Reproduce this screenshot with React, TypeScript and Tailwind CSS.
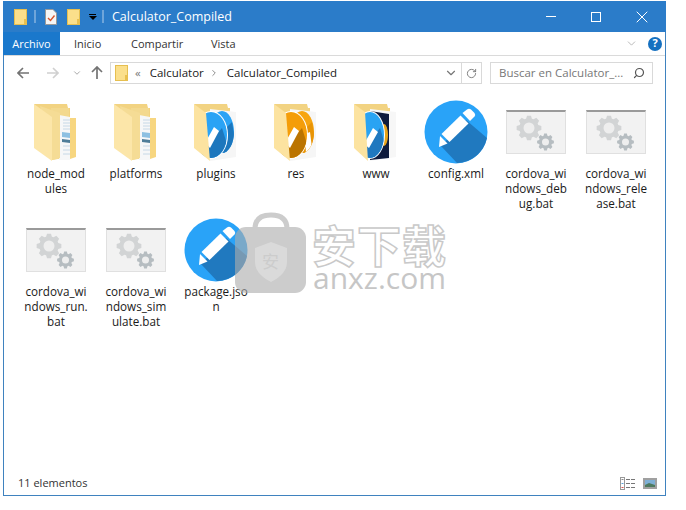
import React, { useId } from "react";
import { ChevronDown, ChevronRight, X, Search, RotateCw } from "lucide-react";

const cssFont = "font-['Open_Sans','Noto_Sans',sans-serif]";

function gearPath(cx: number, cy: number, r: number, teeth: number) {
  const pts: string[] = [];
  const step = (Math.PI * 2) / teeth;
  for (let i = 0; i < teeth; i++) {
    const a = i * step;
    const offs: [number, number][] = [
      [-0.32, 0.78],
      [-0.17, 1],
      [0.17, 1],
      [0.32, 0.78],
    ];
    for (const [o, k] of offs) {
      const x = cx + Math.cos(a + o * step * 1.2) * r * k;
      const y = cy + Math.sin(a + o * step * 1.2) * r * k;
      pts.push(`${x.toFixed(2)} ${y.toFixed(2)}`);
    }
  }
  return "M" + pts.join("L") + "Z";
}

function SmallFolder() {
  return (
    <svg width="13" height="16" viewBox="0 0 13 16">
      <rect x="0.5" y="0.5" width="12" height="15" fill="#fbdf8b" stroke="#e6bf50" />
      <rect x="10" y="10" width="2.5" height="5.5" fill="#e9c04f" />
    </svg>
  );
}

function FolderBack({ children }: { children?: React.ReactNode }) {
  return (
    <svg width="60" height="60" viewBox="0 0 60 60">
      <path d="M8 2H41L42 6H44V55L26 58Z" fill="#f2d382" />
      {children}
    </svg>
  );
}

function DocFolder() {
  return (
    <FolderBack>
      <path d="M25 6H43V57H25Z" fill="#f3d98f" />
      <path d="M33 13L44 15V58L33 58Z" fill="#f6f7f8" />
      <path d="M37 18H44M37 21H44M37 24H44M37 27H44M37 44H44M37 48H44M37 52H44" stroke="#c6d8e6" strokeWidth="1" />
      <path d="M36 30L44 31V36L36 35Z" fill="#8dc0e2" />
      <path d="M36 37L44 38V41L36 40Z" fill="#4f7d99" />
      <path d="M44 16H50V55L44 57Z" fill="#f7d680" />
      <path d="M14 4L34 11V56L26 58Z" fill="#f5dc95" />
      <path d="M8 2L26 15V59L8 46Z" fill="#fce6a9" />
    </FolderBack>
  );
}

function DiscFolder({
  light,
  dark,
  backLight,
  backDark,
  backPencil,
}: {
  light: string;
  dark: string;
  backLight: string;
  backDark: string;
  backPencil?: boolean;
}) {
  const id = useId();
  return (
    <FolderBack>
      <path d="M24 7L50 10V55L24 59Z" fill="#f6f6f6" />
      <clipPath id={id + "b"}>
        <ellipse cx="36" cy="30" rx="12" ry="21" />
      </clipPath>
      <clipPath id={id + "f"}>
        <ellipse cx="25" cy="33" rx="16" ry="23" />
      </clipPath>
      <g clipPath={`url(#${id}b)`}>
        <rect x="20" y="5" width="30" height="50" fill={backLight} />
        <path d="M28 38L46 20L52 56H28Z" fill={backDark} />
        {backPencil && <path d="M39 32L44 30L46 46L40 52Z" fill="#ffffff" />}
      </g>
      <ellipse cx="25" cy="33" rx="17" ry="24" fill="#ffffff" />
      <g clipPath={`url(#${id}f)`}>
        <rect x="0" y="8" width="44" height="50" fill={light} />
        <path d="M14 52L36 26L46 58H14Z" fill={dark} />
      </g>
      <path d="M19 41L28 25L33 29L24 46Z" fill="#ffffff" />
      <path d="M8 2L20 11L24 59L8 46Z" fill="#fce3a0" />
    </FolderBack>
  );
}

function WwwFolder() {
  const id = useId();
  return (
    <FolderBack>
      <path d="M24 7L50 10V55L24 59Z" fill="#f7f7f7" />
      <path d="M24 9L43 12V56L24 58Z" fill="#0f1b3d" />
      <ellipse cx="38" cy="33" rx="4" ry="11" fill="#e8a318" />
      <ellipse cx="24" cy="33" rx="15" ry="24" fill="#ffffff" />
      <clipPath id={id}>
        <ellipse cx="24" cy="33" rx="14" ry="23" />
      </clipPath>
      <g clipPath={`url(#${id})`}>
        <rect x="0" y="8" width="44" height="50" fill="#29a3f3" />
        <path d="M14 52L34 26L44 58H14Z" fill="#1f78bf" />
      </g>
      <path d="M18 42L27 26L32 30L23 46Z" fill="#ffffff" />
      <path d="M8 2L19 10L22 59L8 46Z" fill="#fce3a0" />
    </FolderBack>
  );
}

function PencilBadge() {
  return (
    <svg width="64" height="64" viewBox="0 0 64 64">
      <circle cx="32" cy="32" r="31.5" fill="#29a3f8" />
      <path d="M17 46L42 20L63 38A31.5 31.5 0 0 1 33 63Z" fill="#2079bf" />
      <path d="M38.5 13L43 9.5Q45 8 47 9.5L50.5 13Q52 15 50.5 16.5L46 21Z" fill="#ffffff" />
      <path d="M36.5 15.5L44.5 23.5L25.5 42L17.5 34Z" fill="#ffffff" />
      <path d="M16 36L23.5 43.5L15 47Z" fill="#ffffff" />
    </svg>
  );
}

function BatIcon() {
  return (
    <div className="relative h-[44px] w-[60px] border border-[#e0e0e0] border-t-[2px] border-t-[#9a9a9a] bg-[#f2f2f2]">
      <svg width="58" height="40" viewBox="0 0 58 40" className="absolute left-0 top-0">
        <path d={gearPath(22, 16, 12.5, 8)} fill="#d2d4d5" />
        <circle cx="22" cy="16" r="5.5" fill="#eeeeee" />
        <path d={gearPath(38.5, 30, 8.5, 8)} fill="#b6bdc1" />
        <circle cx="38.5" cy="30" r="3.5" fill="#eeeeee" />
      </svg>
    </div>
  );
}

type Item = { icon: React.ReactNode; label: string };

const items: Item[] = [
  { icon: <DocFolder />, label: "node_mod\nules" },
  { icon: <DocFolder />, label: "platforms" },
  {
    icon: <DiscFolder light="#2aa3f5" dark="#1d77bd" backLight="#2aa3f5" backDark="#1d77bd" />,
    label: "plugins",
  },
  {
    icon: <DiscFolder light="#f49d09" dark="#bb7400" backLight="#f7a510" backDark="#e89406" backPencil />,
    label: "res",
  },
  { icon: <WwwFolder />, label: "www" },
  { icon: <PencilBadge />, label: "config.xml" },
  { icon: <BatIcon />, label: "cordova_wi\nndows_deb\nug.bat" },
  { icon: <BatIcon />, label: "cordova_wi\nndows_rele\nase.bat" },
  { icon: <BatIcon />, label: "cordova_wi\nndows_run.\nbat" },
  { icon: <BatIcon />, label: "cordova_wi\nndows_sim\nulate.bat" },
  { icon: <PencilBadge />, label: "package.jso\nn" },
];

function FileCell({ item }: { item: Item }) {
  return (
    <div className="flex h-[118px] w-[80px] flex-col items-center">
      <div className="flex h-[66px] w-[64px] items-center justify-center">{item.icon}</div>
      <div className="mt-[1px] whitespace-pre text-center text-[11.7px] leading-[15px] text-[#1a1a1a]">
        {item.label}
      </div>
    </div>
  );
}

function Watermark() {
  return (
    <div className="absolute left-[235px] top-[212px] flex items-start gap-[4px]">
      <div className="relative h-[82px] w-[72px] opacity-[0.62]">
        <svg width="72" height="82" viewBox="0 0 72 82">
          <path d="M20 20V17Q20 3 36 3Q52 3 52 17V20" fill="none" stroke="#adadad" strokeWidth="5" />
          <rect x="0" y="15" width="71" height="66" rx="11" fill="#adadad" />
          <path d="M36 30L52 36V50Q52 62 36 70Q20 62 20 50V36Z" fill="#c4c4c4" />
        </svg>
        <div className="absolute left-[27px] top-[39px] text-[17px] leading-[20px] text-[#adadad] font-['Noto_Sans_CJK_SC',sans-serif]">
          安
        </div>
      </div>
      <div className="ml-[1px] mt-[11px] flex flex-col items-center">
        <div className="text-[44px] font-bold leading-[42px] tracking-[1px] text-white [-webkit-text-stroke:1.5px_#c9c9c9] font-['Noto_Sans_CJK_SC',sans-serif]">
          安下载
        </div>
        <div className="text-[30px] font-medium leading-[26px] text-[#c6c6c6] font-['Open_Sans',sans-serif]">
          anxz.com
        </div>
      </div>
    </div>
  );
}

export default function App() {
  return (
    <div className={`relative h-[510px] w-[686px] overflow-hidden bg-white pl-[3px] pt-px ${cssFont}`}>
      <div className="flex h-[495px] w-[663px] flex-col border border-t-0 border-[#3f82bf]">
        {/* title bar */}
        <div className="-mx-px flex h-[31px] shrink-0 items-center bg-[#2b7cc9] pl-[11px] text-white">
          <SmallFolder />
          <div className="ml-[7px] h-[13px] w-[2px] bg-[#6ea5da]" />
          <svg width="12" height="16" viewBox="0 0 12 16" className="ml-[9px]">
            <path d="M0.5 0.5H8L11.5 4V15.5H0.5Z" fill="#f6f6f6" stroke="#9a9a9a" />
            <path d="M3 9L5.5 11.5L9.5 6.5" fill="none" stroke="#d9542b" strokeWidth="1.4" />
          </svg>
          <div className="ml-[10px]">
            <SmallFolder />
          </div>
          <div className="ml-[8px] flex w-[9px] flex-col items-center">
            <div className="h-px w-[7px] bg-black" />
            <div className="mt-px h-0 w-0 border-x-[4px] border-t-[4px] border-x-transparent border-t-black" />
          </div>
          <div className="ml-[5px] h-[13px] w-[2px] bg-[#6ea5da]" />
          <div className="ml-[8px] text-[12.5px] leading-[16px]">Calculator_Compiled</div>
          <div className="ml-auto flex items-center">
            <div className="h-px w-[10px] bg-white" />
            <div className="ml-[35px] h-[10px] w-[10px] border border-white" />
            <X className="ml-[31px] mr-[14px] h-[20px] w-[20px]" strokeWidth={1.2} />
          </div>
        </div>

        {/* ribbon tabs */}
        <div className="flex h-[24px] shrink-0 items-center border-b border-[#dadada] text-[11px] text-[#333333]">
          <div className="-ml-px flex h-[23px] w-[57px] items-center justify-center bg-[#1a78cc] pt-px text-white">Archivo</div>
          <div className="ml-[14px] w-[33px] pt-[2px]">Inicio</div>
          <div className="ml-[24px] w-[52px] pt-[2px]">Compartir</div>
          <div className="ml-[28px] pt-[2px]">Vista</div>
          <ChevronDown className="ml-auto h-[13px] w-[13px] text-[#aaaaaa]" strokeWidth={1.5} />
          <div className="ml-[10px] mr-[3px] flex h-[14px] w-[14px] items-center justify-center rounded-full bg-[#1570c0] text-[11px] font-bold text-white">
            ?
          </div>
        </div>

        {/* address row */}
        <div className="flex h-[34px] shrink-0 items-center text-[#666666]">
          <svg width="12" height="12" viewBox="0 0 12 12" className="ml-[13px]">
            <path d="M6 1L1 6L6 11M1 6H12" fill="none" stroke="#737373" strokeWidth="1.6" />
          </svg>
          <svg width="12" height="12" viewBox="0 0 12 12" className="ml-[18px]">
            <path d="M6 1L11 6L6 11M11 6H0" fill="none" stroke="#d0d0d0" strokeWidth="1.6" />
          </svg>
          <ChevronDown className="ml-[13px] h-[10px] w-[10px] text-[#999999]" strokeWidth={2} />
          <svg width="12" height="14" viewBox="0 0 12 14" className="ml-[9px]">
            <path d="M1 6L6 1L11 6M6 1V13" fill="none" stroke="#737373" strokeWidth="1.7" />
          </svg>
          <div className="ml-[7px] flex h-[22px] w-[372px] items-center border border-[#d9d9d9] text-[11.5px] text-[#1a1a1a]">
            <div className="ml-[4px]">
              <SmallFolder />
            </div>
            <span className="ml-[7px] text-[#777777]">«</span>
            <span className="ml-[9px]">Calculator</span>
            <ChevronRight className="ml-[5px] h-[10px] w-[10px] text-[#777777]" strokeWidth={2} />
            <span className="ml-[8px]">Calculator_Compiled</span>
            <ChevronDown className="ml-auto mr-[3px] h-[14px] w-[14px] text-[#777777]" strokeWidth={2} />
            <div className="flex h-full w-[20px] items-center justify-center border-l border-[#d9d9d9]">
              <RotateCw className="h-[11px] w-[11px] text-[#777777]" strokeWidth={2} />
            </div>
          </div>
          <div className="ml-[8px] flex h-[22px] w-[163px] items-center border border-[#d9d9d9] pl-[8px] text-[11.5px] text-[#777777]">
            <span>Buscar en Calculator_...</span>
            <Search className="ml-auto mr-[7px] h-[12px] w-[12px] -scale-x-100 text-[#555555]" strokeWidth={2.4} />
          </div>
        </div>

        {/* files */}
        <div className="grid flex-1 grid-cols-[repeat(8,80px)] content-start pl-[12px] pt-[9px]">
          {items.map((item, i) => (
            <FileCell key={i} item={item} />
          ))}
        </div>

        {/* status bar */}
        <div className="flex h-[24px] shrink-0 items-center pl-[14px] text-[11px] text-[#333333]">
          <span>11 elementos</span>
          <div className="ml-auto flex items-center gap-[8px] pr-[8px]">
            <svg width="15" height="13" viewBox="0 0 15 13">
              <rect x="0.5" y="0.5" width="4" height="12" fill="none" stroke="#999999" />
              <path d="M1.5 2.5H3.5" stroke="#888888" />
              <path d="M1.5 6.5H3.5" stroke="#5aa0d8" />
              <path d="M1.5 10.5H3.5" stroke="#d9534f" />
              <path d="M6 2.5H15M6 6.5H15M6 10.5H15" stroke="#777777" strokeDasharray="4 1" />
            </svg>
            <svg width="14" height="11" viewBox="0 0 14 11">
              <rect x="1" y="1" width="12" height="9" fill="#7fb0d6" stroke="#a0a0a0" strokeWidth="2" />
              <path d="M2 7L6 5L12 7V9H2Z" fill="#4e7a5f" />
            </svg>
          </div>
        </div>
      </div>
      <Watermark />
    </div>
  );
}
